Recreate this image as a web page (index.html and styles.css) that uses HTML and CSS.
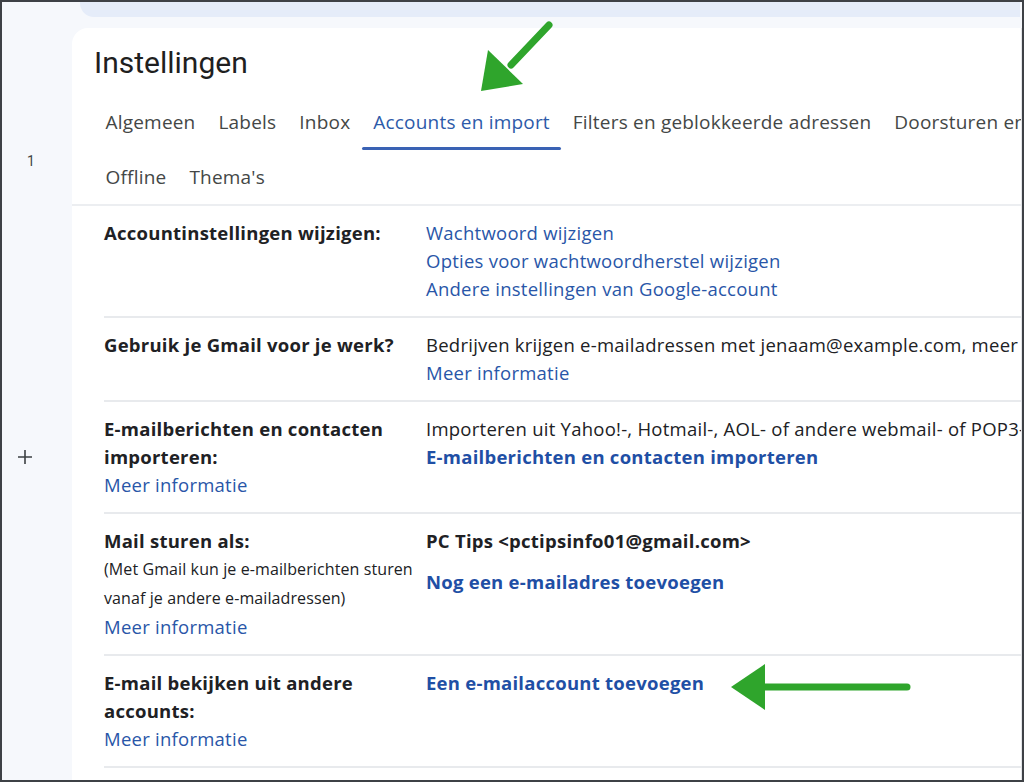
FILE: index.html
```html
<!DOCTYPE html>
<html lang="nl">
<head>
<meta charset="utf-8">
<title>Instellingen</title>
<link rel="stylesheet" href="styles.css">
</head>
<body>
<div class="frame">
  <aside class="rail">
    <div class="rail-num">1</div>
    <div class="rail-plus">
      <svg width="16" height="16" viewBox="0 0 16 16"><path d="M8 1v14M1 8h14" stroke="#3c4043" stroke-width="1.6" fill="none"/></svg>
    </div>
  </aside>
  <div class="main">
    <div class="topband"></div>
    <section class="card">
      <h1 class="title">Instellingen</h1>
      <nav class="tabs">
        <div class="tabrow">
          <span class="tab">Algemeen</span>
          <span class="tab">Labels</span>
          <span class="tab">Inbox</span>
          <span class="tab active">Accounts en import</span>
          <span class="tab">Filters en geblokkeerde adressen</span>
          <span class="tab">Doorsturen en POP/IMAP</span>
        </div>
        <div class="tabrow">
          <span class="tab">Offline</span>
          <span class="tab">Thema's</span>
        </div>
      </nav>
      <div class="rows">
        <div class="row">
          <div class="label"><b>Accountinstellingen wijzigen:</b></div>
          <div class="value">
            <a class="link">Wachtwoord wijzigen</a>
            <a class="link">Opties voor wachtwoordherstel wijzigen</a>
            <a class="link">Andere instellingen van Google-account</a>
          </div>
        </div>
        <div class="row">
          <div class="label"><b>Gebruik je Gmail voor je werk?</b></div>
          <div class="value">
            <span class="text">Bedrijven krijgen e-mailadressen met jenaam@example.com, meer opslagruimte en tools op beheerniveau.</span>
            <a class="link">Meer informatie</a>
          </div>
        </div>
        <div class="row">
          <div class="label"><b>E-mailberichten en contacten importeren:</b><a class="link">Meer informatie</a></div>
          <div class="value">
            <span class="text">Importeren uit Yahoo!-, Hotmail-, AOL- of andere webmail- of POP3-accounts.</span>
            <a class="link strong">E-mailberichten en contacten importeren</a>
          </div>
        </div>
        <div class="row">
          <div class="label"><b>Mail sturen als:</b><span class="small">(Met Gmail kun je e-mailberichten sturen vanaf je andere e-mailadressen)</span><a class="link">Meer informatie</a></div>
          <div class="value">
            <b class="text">PC Tips &lt;pctipsinfo01@gmail.com&gt;</b>
            <a class="link strong gap">Nog een e-mailadres toevoegen</a>
          </div>
        </div>
        <div class="row">
          <div class="label"><b>E-mail bekijken uit andere accounts:</b><a class="link">Meer informatie</a></div>
          <div class="value">
            <a class="link strong">Een e-mailaccount toevoegen</a>
          </div>
        </div>
      </div>
    </section>
  </div>
  <svg class="arrow arrow-tabs" width="90" height="90" viewBox="0 0 90 90">
    <path d="M73 6 L35 46" stroke="#2fa52c" stroke-width="7" stroke-linecap="round" fill="none"/>
    <polygon points="5,72 12,31 47,65" fill="#2fa52c"/>
  </svg>
  <svg class="arrow arrow-account" width="190" height="60" viewBox="0 0 190 60">
    <path d="M176 30 L30 30" stroke="#2fa52c" stroke-width="7" stroke-linecap="round" fill="none"/>
    <polygon points="0,30 34,7 34,53" fill="#2fa52c"/>
  </svg>
</div>
</body>
</html>
```
FILE: styles.css
```css
* { box-sizing: border-box; }
html, body { margin: 0; padding: 0; }
body {
  font-family: "Open Sans", Roboto, "Liberation Sans", Arial, sans-serif;
  color: #202124;
  background: #f6f8fc;
}
.frame {
  position: relative;
  width: 1024px;
  height: 782px;
  border: 2px solid #3e4146;
  background: #f6f8fc;
  display: flex;
  overflow: hidden;
}
.rail {
  width: 70px;
  flex: none;
  display: flex;
  flex-direction: column;
  align-items: center;
}
.rail-num {
  margin-top: 150px;
  margin-left: -12px;
  font-family: Roboto, sans-serif;
  font-size: 14px;
  color: #444746;
  line-height: 18px;
}
.rail-plus {
  margin-top: 279px;
  margin-left: -24px;
  height: 16px;
}
.rail-plus svg { display: block; }
.main {
  flex: 1;
  display: flex;
  flex-direction: column;
  min-width: 0;
}
.topband {
  height: 15px;
  margin-left: 8px;
  margin-right: 2px;
  background: #e5ecf9;
  border-bottom-left-radius: 14px;
  flex: none;
}
.card {
  margin-top: 11px;
  flex: 1;
  background: #fff;
  border-top-left-radius: 16px;
  border-right: 1px solid #e3e5e8;
  overflow: hidden;
  min-width: 0;
}
.title {
  margin: 0;
  padding: 17px 0 0 22px;
  font-family: Roboto, sans-serif;
  font-size: 30px;
  line-height: 36px;
  font-weight: 400;
  color: #1f1f1f;
}
.tabs {
  margin-top: 13px;
  border-bottom: 2px solid #eceef1;
}
.tabrow {
  display: flex;
  white-space: nowrap;
  padding-left: 22px;
}
.tabrow + .tabrow .tab { height: 54px; }
.tab {
  position: relative;
  display: flex;
  align-items: center;
  height: 56px;
  padding: 0 11.5px;
  font-size: 19px;
  letter-spacing: 0.2px;
  color: #444746;
  flex: none;
}
.tab.active { color: #2d5aa9; }
.tab.active::after {
  content: "";
  position: absolute;
  left: 0;
  right: 0;
  bottom: 0;
  height: 3px;
  border-radius: 2px;
  background: #3a62b4;
}
.rows {
  padding-left: 32px;
}
.row {
  display: flex;
  border-bottom: 2px solid #e8eaed;
  padding: 13px 0 13px;
  font-size: 18.5px;
  letter-spacing: 0.25px;
  line-height: 28px;
  white-space: nowrap;
}
.label {
  width: 322px;
  flex: none;
  display: flex;
  flex-direction: column;
  white-space: normal;
}
.label b { font-weight: 700; color: #202124; }
.value {
  display: flex;
  flex-direction: column;
  align-items: flex-start;
  min-width: 0;
}
.text { color: #202124; }
b.text { font-weight: 700; }
.link { color: #2956a8; cursor: pointer; }
.link.strong { font-weight: 700; color: #1f4fa5; }
.link.gap { margin-top: 13px; }
.small {
  font-size: 16px;
  letter-spacing: 0.1px;
  line-height: 29px;
  color: #202124;
}
.arrow { position: absolute; }
.arrow-tabs { left: 474px; top: 17px; }
.arrow-account { left: 729px; top: 655px; }
```
